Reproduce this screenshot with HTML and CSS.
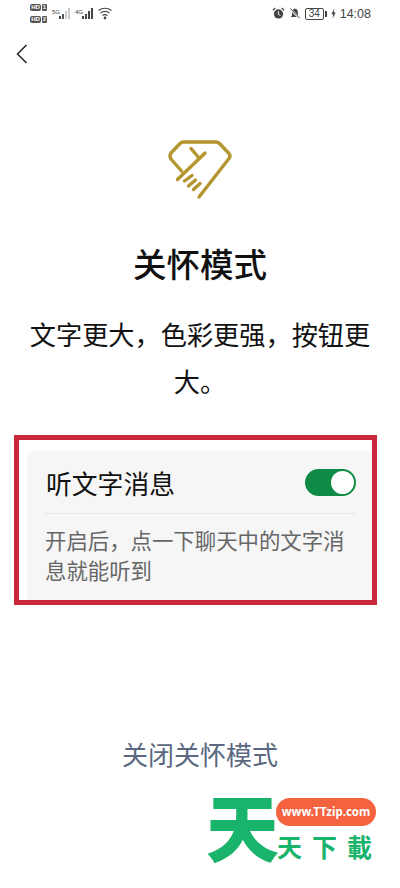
FILE: index.html
```html
<!DOCTYPE html>
<html lang="zh-CN">
<head>
    <meta charset="UTF-8">
    <meta name="viewport" content="width=device-width, initial-scale=1.0">
    <title>关怀模式</title>
    <link rel="stylesheet" href="styles.css">
</head>
<body>
    <div class="page">
        <div class="statusbar">
            <div class="status-left">
                <div class="sim-col">
                    <div class="sim"><span class="hd">HD</span><span class="sim-no">1</span></div>
                    <div class="sim"><span class="hd">HD</span><span class="sim-no">2</span></div>
                </div>
                <div class="net">
                    <span class="net-label">5G</span>
                    <svg width="12" height="11" viewBox="0 0 12 11">
                        <rect x="0" y="8" width="2" height="3" fill="#444"/>
                        <rect x="3" y="6" width="2" height="5" fill="#555"/>
                        <rect x="6" y="3" width="2" height="8" fill="#ccc"/>
                        <rect x="9" y="0" width="2" height="11" fill="#ccc"/>
                    </svg>
                </div>
                <div class="net">
                    <span class="net-label">4G</span>
                    <svg width="12" height="11" viewBox="0 0 12 11">
                        <rect x="0" y="8" width="2" height="3" fill="#444"/>
                        <rect x="3" y="6" width="2" height="5" fill="#444"/>
                        <rect x="6" y="3" width="2" height="8" fill="#444"/>
                        <rect x="9" y="0" width="2" height="11" fill="#444"/>
                    </svg>
                </div>
                <svg class="wifi" width="14" height="13" viewBox="0 0 14 13" fill="none" stroke="#444" stroke-width="1.2">
                    <path d="M0.5 3.5Q7 -1 13.5 3.5"/>
                    <path d="M2.5 6Q7 2.8 11.5 6"/>
                    <path d="M4.5 8.5Q7 6.8 9.5 8.5"/>
                    <circle cx="7" cy="11" r="0.8" fill="#444"/>
                </svg>
            </div>
            <div class="status-right">
                <svg width="13" height="13" viewBox="0 0 14 14">
                    <circle cx="7" cy="7.5" r="5" fill="#444"/>
                    <path d="M7 4.5V8L9.2 9.2" fill="none" stroke="#fff" stroke-width="1"/>
                    <path d="M1 3.5L3.5 1M13 3.5L10.5 1" stroke="#444" stroke-width="1.4"/>
                </svg>
                <svg width="12" height="13" viewBox="0 0 14 14">
                    <path d="M7 1.5C4.5 1.5 3.6 3.5 3.6 6V9L2 11H12L10.4 9V6C10.4 3.5 9.5 1.5 7 1.5Z" fill="#444"/>
                    <path d="M1.5 1.5L12.5 13" stroke="#fff" stroke-width="2.4"/>
                    <path d="M1.5 1L12.5 12.5" stroke="#444" stroke-width="1.1"/>
                </svg>
                <div class="battery"><span class="battery-body">34</span><span class="battery-tip"></span></div>
                <svg width="5" height="11" viewBox="0 0 6 12"><path d="M4 0L0.5 7H2.6L2 12L5.6 4.8H3.4Z" fill="#444"/></svg>
                <span class="clock">14:08</span>
            </div>
        </div>

        <div class="topbar">
            <svg width="12" height="20" viewBox="0 0 12 20" fill="none" stroke="#222" stroke-width="1.5">
                <path d="M10.5 1L1.5 10L10.5 19"/>
            </svg>
        </div>

        <div class="care-icon">
            <svg width="70" height="64" viewBox="0 0 70 64" fill="none" stroke="#b5952f" stroke-width="3.4" stroke-linecap="round" stroke-linejoin="round">
                <path d="M16.5 33L6 21Q4 18 6 15L15 5.5Q16.5 4 18.5 4H51Q53 4 54.5 5.5L64 15.5Q66 18 64 20.5L34 59"/>
                <path d="M12.5 41.5L40 15"/>
                <path d="M26 10.5L34.5 20.5"/>
                <path d="M19.5 43L27 37.5"/>
                <path d="M23.5 48L30.5 42"/>
                <path d="M28.5 51.5L35 45.5"/>
            </svg>
        </div>

        <h1 class="title">关怀模式</h1>
        <p class="intro">文字更大，色彩更强，按钮更大。</p>

        <div class="highlight">
            <div class="card">
                <div class="card-head">
                    <span class="card-title">听文字消息</span>
                    <span class="toggle"><span class="knob"></span></span>
                </div>
                <p class="card-desc">开启后，点一下聊天中的文字消息就能听到</p>
            </div>
        </div>

        <div class="close-link">关闭关怀模式</div>

        <div class="watermark">
            <span class="wm-big">天</span>
            <span class="wm-url">www.TTzip.com</span>
            <span class="wm-name">天下載</span>
        </div>
    </div>
</body>
</html>
```

FILE: styles.css
```css
* {
    box-sizing: border-box;
}
body {
    margin: 0;
    background: #fff;
    font-family: "Noto Sans CJK SC", "Liberation Sans", sans-serif;
}
.page {
    position: relative;
    width: 400px;
    height: 888px;
    overflow: hidden;
    display: flex;
    flex-direction: column;
}
.statusbar {
    height: 27px;
    padding: 0 29px 0 30px;
    display: flex;
    justify-content: space-between;
    align-items: center;
    color: #444;
}
.status-left,
.status-right {
    display: flex;
    align-items: center;
    gap: 4px;
}
.sim-col {
    display: flex;
    flex-direction: column;
    gap: 5px;
    margin-right: 1px;
}
.sim {
    display: flex;
    gap: 1px;
}
.hd {
    width: 11px;
    height: 7px;
    background: #555;
    border-radius: 2px;
    color: #fff;
    font: bold 6px/7px "Liberation Sans", sans-serif;
    text-align: center;
}
.sim-no {
    width: 5px;
    height: 7px;
    background: #555;
    border-radius: 1px;
    color: #fff;
    font: bold 6px/7px "Liberation Sans", sans-serif;
    text-align: center;
}
.net {
    display: flex;
    align-items: flex-start;
}
.net-label {
    font: 6px/8px "Liberation Sans", sans-serif;
    width: 7px;
    flex: none;
}
.battery {
    display: flex;
    align-items: center;
}
.battery-body {
    width: 19px;
    height: 12px;
    border: 1px solid #444;
    border-radius: 2px;
    font: 10px/10px "Liberation Sans", sans-serif;
    text-align: center;
}
.battery-tip {
    width: 2px;
    height: 6px;
    margin-left: 1px;
    background: #444;
}
.clock {
    font: 12.5px "Liberation Sans", sans-serif;
}
.topbar {
    height: 40px;
    padding: 17px 0 0 16px;
}
.care-icon {
    margin-top: 71px;
    padding-left: 165px;
    display: flex;
}
.title {
    margin: 36px 0 0;
    height: 50px;
    font-size: 33.5px;
    line-height: 50px;
    font-weight: 500;
    text-align: center;
    color: #111;
}
.intro {
    margin: 23px 29px 0;
    font-size: 26.2px;
    line-height: 47px;
    text-align: center;
    color: #111;
}
.highlight {
    margin: 30px 0 0 14px;
    width: 363px;
    height: 170px;
    padding: 11px 0 0 8px;
    border: 5px solid #c8283a;
}
.card {
    width: 345px;
    height: 149px;
    padding: 0 0 0 17px;
    background: #f6f6f6;
    border-radius: 10px 0 0 0;
}
.card-head {
    height: 63px;
    width: 312px;
    display: flex;
    justify-content: space-between;
    align-items: center;
    border-bottom: 1px solid #e6e6e6;
}
.card-title {
    margin-left: 2px;
    font-size: 25.8px;
    color: #111;
}
.toggle {
    width: 51px;
    height: 27px;
    padding: 2px;
    display: flex;
    justify-content: flex-end;
    background: #0f8a45;
    border-radius: 14px;
}
.knob {
    width: 23px;
    height: 23px;
    background: #fff;
    border-radius: 50%;
}
.card-desc {
    margin: 11px 0 0 1px;
    width: 305px;
    font-size: 21.4px;
    line-height: 30px;
    color: #666;
}
.close-link {
    margin-top: 129px;
    font-size: 26px;
    line-height: 40px;
    text-align: center;
    color: #5a6880;
}
.watermark {
    position: absolute;
    left: 205px;
    top: 790px;
    width: 180px;
    height: 80px;
}
.wm-big {
    position: absolute;
    left: 1px;
    top: -16px;
    font-size: 73px;
    line-height: 100px;
    font-weight: 900;
    color: #19b36b;
}
.wm-url {
    position: absolute;
    left: 71px;
    top: 8px;
    width: 100px;
    height: 28px;
    background: #f4623f;
    border-radius: 14px;
    color: #fff;
    font: bold 11.5px/28px "Noto Sans", sans-serif;
    text-align: center;
}
.wm-name {
    position: absolute;
    left: 72px;
    top: 39px;
    font-size: 25px;
    line-height: 34px;
    font-weight: 700;
    letter-spacing: 10px;
    color: #19b36b;
    white-space: nowrap;
}
```
